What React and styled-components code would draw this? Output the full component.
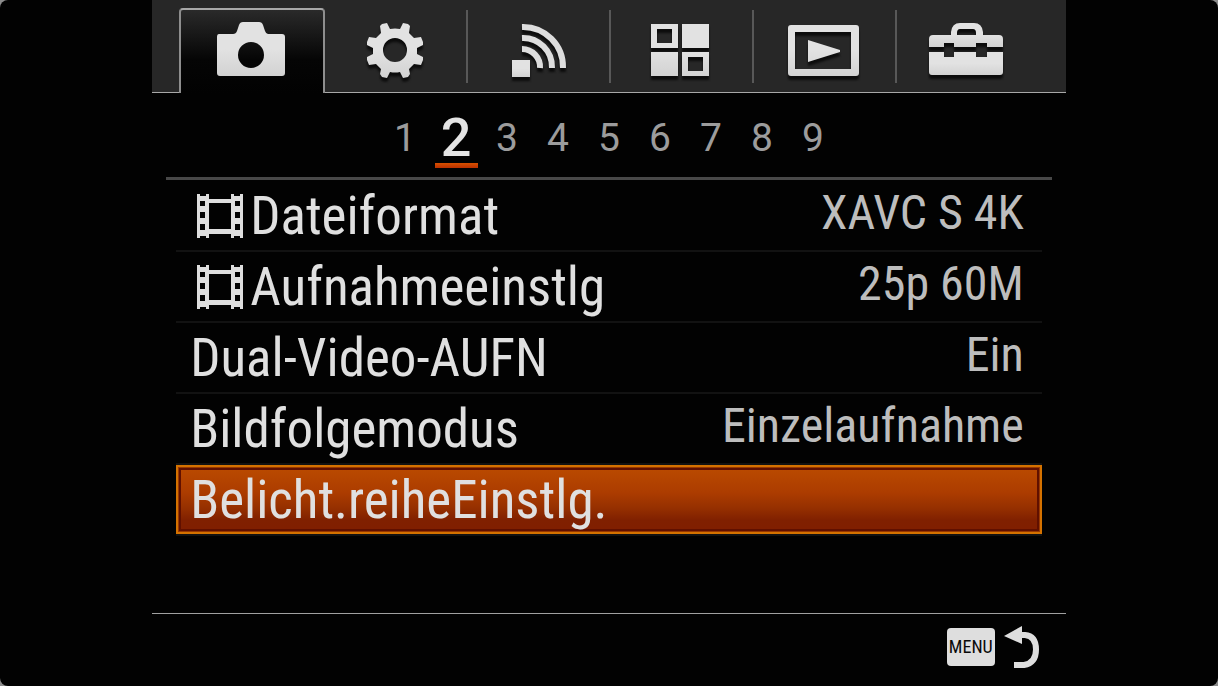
import React, { useState } from "react";
import styled, { createGlobalStyle, css } from "styled-components";

const GlobalStyle = createGlobalStyle`
  * { box-sizing: border-box; }
  body { margin: 0; background: #8c8c8c; }
  button { font: inherit; color: inherit; background: none; border: 0; padding: 0; cursor: pointer; }
`;

const Bezel = styled.div`
  min-height: 100vh;
  background: #020202;
  border-radius: 8px;
`;

const Screen = styled.main`
  display: flex;
  flex-direction: column;
  width: 75%;
  min-height: 100vh;
  margin: 0 auto;
  color: #e0e0e0;
  font-family: "Roboto Condensed", Roboto, sans-serif;
`;

const TabBar = styled.nav`
  display: grid;
  grid-template-columns: repeat(6, 1fr);
  align-items: end;
  height: 93px;
  padding: 0 26px 0 30px;
  background: #272727;
  box-shadow: inset 0 -1px 0 #a8a8a8;
`;

const Tab = styled.button`
  position: relative;
  display: flex;
  align-items: center;
  justify-content: center;
  height: 85px;
  padding: 0 4px 2px 0;

  ${({ $divided }) => $divided && css`
    &::after {
      content: "";
      position: absolute;
      top: 2px;
      right: 0;
      width: 2px;
      height: 73px;
      background: #585858;
    }
  `}

  ${({ $active }) => $active && css`
    margin-left: -3px;
    padding: 0;
    border: 2px solid #8e8e8e;
    border-top-color: #a8a8a8;
    border-bottom: 0;
    border-radius: 4px 4px 0 0;
    background: linear-gradient(#2a2a2a, #050505 60%, #020202);
  `}
`;

const TabIcon = styled.svg`
  display: block;
  width: 80px;
  height: 64px;
  fill: url(#metal);
  filter: ${({ $flat }) => ($flat ? "none" : "drop-shadow(0 4px 1px #0c0c0c)")};
`;

const Pages = styled.nav`
  display: flex;
  justify-content: center;
  gap: 8px;
  height: 84px;
  margin: 0 14px;
`;

const PageButton = styled.button`
  width: 43px;
  height: 75px;
  padding-top: 13px;
  font-family: Roboto, sans-serif;
  font-size: 39px;
  line-height: 64px;
  color: #9c9c9c;

  ${({ $active }) => $active && css`
    font-size: 54px;
    font-weight: 500;
    color: #e4e4e4;
    background: linear-gradient(#d85000, #b83000) bottom / 100% 5px no-repeat;
  `}
`;

const Rule = styled.hr`
  width: calc(100% - 28px);
  height: 3px;
  margin: 0 auto;
  border: 0;
  background: #484848;
`;

const Menu = styled.ul`
  flex: 1;
  margin: 0;
  padding: 1px 24px 0;
  list-style: none;
`;

const Item = styled.li`
  height: 71px;
  border-bottom: 2px solid #121212;
`;

const Row = styled.button`
  display: flex;
  align-items: center;
  width: 100%;
  height: 69px;
  padding: 0 18px 0 14px;
  white-space: nowrap;

  ${({ $selected }) => $selected && css`
    background: linear-gradient(#bc4c00, #ac3c00 40%, #963000 62%, #802000 80%, #801e00);
    box-shadow: inset 0 0 0 2px #d47200, inset 0 0 0 3px #983800, inset 0 0 0 5px #601000;
  `}
`;

const Label = styled.span`
  font-size: 53px;
  line-height: 64px;
`;

const Value = styled.span`
  margin-left: auto;
  padding-bottom: 6px;
  font-size: 48px;
  line-height: 60px;
  color: #bdbdbd;
`;

const FilmIcon = styled.svg`
  width: 46px;
  height: 46px;
  margin: 0 7px;
  fill: #dedede;
`;

const Footer = styled.footer`
  display: flex;
  justify-content: flex-end;
  height: 73px;
  padding: 12px 26px 0 0;
  border-top: 1px solid #a0a0a0;
`;

const BackButton = styled.button`
  display: flex;
  align-items: center;
  gap: 9px;
  height: 42px;
`;

const MenuKey = styled.span`
  width: 48px;
  height: 38px;
  border-radius: 4px;
  background: #dedede;
  color: #0a0a0a;
  font-size: 18px;
  line-height: 38px;
  text-align: center;
`;

const ReturnIcon = styled.svg`
  width: 36px;
  height: 44px;
`;

const icons = {
  camera: (
    <path fillRule="evenodd" d="M7 14h14q3 0 4-3l2-6q1-3 4-3h16q3 0 4 3l2 6q1 3 3 3h14q3 0 3 3v36q0 3-3 3H8q-3 0-3-3V17q0-3 2-3ZM39 22a13 13 0 1 0 0 26a13 13 0 1 0 0-26Z" />
  ),
  gear: (
    <path fillRule="evenodd" d="M27 6l5-1 3 6q5-1 10 0l3-6 5 1 2 2-1 7 5 5 7-1 2 5v3l-6 3v6l6 3v3l-2 5-7-1-5 5 1 5-2 3-5 1-3-6q-5 1-10 0l-3 6-5-1-2-3 1-5-5-5-7 1-2-5v-3l6-3v-6l-6-3v-3l2-5 7 1 5-5-1-7ZM40 20a12 12 0 1 0 0 24a12 12 0 1 0 0-24Z" />
  ),
  wireless: (
    <g>
      <rect x="14" y="42" width="18" height="17" />
      <g fill="none" stroke="#dedede" strokeWidth="6">
        <path d="M24 9a40 40 0 0 1 41 41" />
        <path d="M24 20a29 29 0 0 1 30 30" />
        <path d="M24 31a18 18 0 0 1 18 19" />
      </g>
    </g>
  ),
  apps: (
    <path fillRule="evenodd" d="M11 6h27v24H11ZM17 11v14h15V11ZM42 6h27v24H42ZM11 34h27v24H11ZM42 34h27v24H42ZM48 39v14h15V39Z" />
  ),
  playback: (
    <path fillRule="evenodd" d="M8 7h65q3 0 3 3v45q0 3-3 3H8q-3 0-3-3V10q0-3 3-3ZM12 14v37h56V14ZM25 22l32 10v2L25 44Z" />
  ),
  toolbox: (
    <g>
      <path fillRule="evenodd" d="M7 17h18V14q1-9 9-9h14q8 0 9 9v3h16q4 0 4 4v8H61v-4H50v4H28v-4H18v4H3v-8q0-4 4-4ZM31 17h19v-2q0-4-3-4H34q-3 0-3 4Z" />
      <path d="M3 34h15v5h10v-5h22v5h11v-5h16v20q0 3-3 3H6q-3 0-3-3Z" />
    </g>
  ),
};

const tabs = [
  { id: "camera", name: "Kamera" },
  { id: "gear", name: "Einstellungen" },
  { id: "wireless", name: "Drahtlos" },
  { id: "apps", name: "Applikation" },
  { id: "playback", name: "Wiedergabe" },
  { id: "toolbox", name: "Setup" },
];

const items = [
  { label: "Dateiformat", value: "XAVC S 4K", film: true },
  { label: "Aufnahmeeinstlg", value: "25p 60M", film: true },
  { label: "Dual-Video-AUFN", value: "Ein" },
  { label: "Bildfolgemodus", value: "Einzelaufnahme" },
  { label: "Belicht.reiheEinstlg." },
];

function Film() {
  return (
    <FilmIcon viewBox="0 0 46 46" aria-hidden="true">
      <path fillRule="evenodd" d="M0 1h3v2h6V1h3v5h22V1h3v2h6V1h3v44h-3v-2h-6v2h-3v-4H12v4H9v-2H3v2H0ZM3 8v5h5V8ZM3 19v6h5v-6ZM3 31v6h5v-6ZM38 8v5h5V8ZM38 19v6h5v-6ZM38 31v6h5v-6ZM12 10v26h22V10Z" />
    </FilmIcon>
  );
}

export default function App() {
  const [tab, setTab] = useState("camera");
  const [page, setPage] = useState(2);
  const [selected, setSelected] = useState(4);

  return (
    <Bezel>
      <GlobalStyle />
      <Screen>
        <TabBar aria-label="Menü">
          {tabs.map(({ id, name }, i) => (
            <Tab
              key={id}
              aria-label={name}
              $active={id === tab}
              $divided={i > 0 && i < tabs.length - 1}
              onClick={() => setTab(id)}
            >
              <TabIcon viewBox="0 0 80 64" $flat={id === tab} aria-hidden="true">
                <defs>
                  <linearGradient id="metal" x1="0" y1="0" x2="0" y2="1">
                    <stop offset="0.5" stopColor="#e2e2e2" />
                    <stop offset="1" stopColor="#d2d2d2" />
                  </linearGradient>
                </defs>
                {icons[id]}
              </TabIcon>
            </Tab>
          ))}
        </TabBar>
        <Pages aria-label="Seiten">
          {[1, 2, 3, 4, 5, 6, 7, 8, 9].map((n) => (
            <PageButton key={n} $active={n === page} onClick={() => setPage(n)}>
              {n}
            </PageButton>
          ))}
        </Pages>
        <Rule />
        <Menu>
          {items.map(({ label, value, film }, i) => (
            <Item key={label}>
              <Row $selected={i === selected} onClick={() => setSelected(i)}>
                {film && <Film />}
                <Label>{label}</Label>
                {value && <Value>{value}</Value>}
              </Row>
            </Item>
          ))}
        </Menu>
        <Footer>
          <BackButton aria-label="MENU zurück">
            <MenuKey>MENU</MenuKey>
            <ReturnIcon viewBox="0 0 36 44" aria-hidden="true">
              <path d="M0 11L18 1v18Z" fill="#dedede" />
              <path d="M16 10h5q11 1 11 14.500t-12 15.500H10" fill="none" stroke="#dedede" strokeWidth="6" />
            </ReturnIcon>
          </BackButton>
        </Footer>
      </Screen>
    </Bezel>
  );
}
